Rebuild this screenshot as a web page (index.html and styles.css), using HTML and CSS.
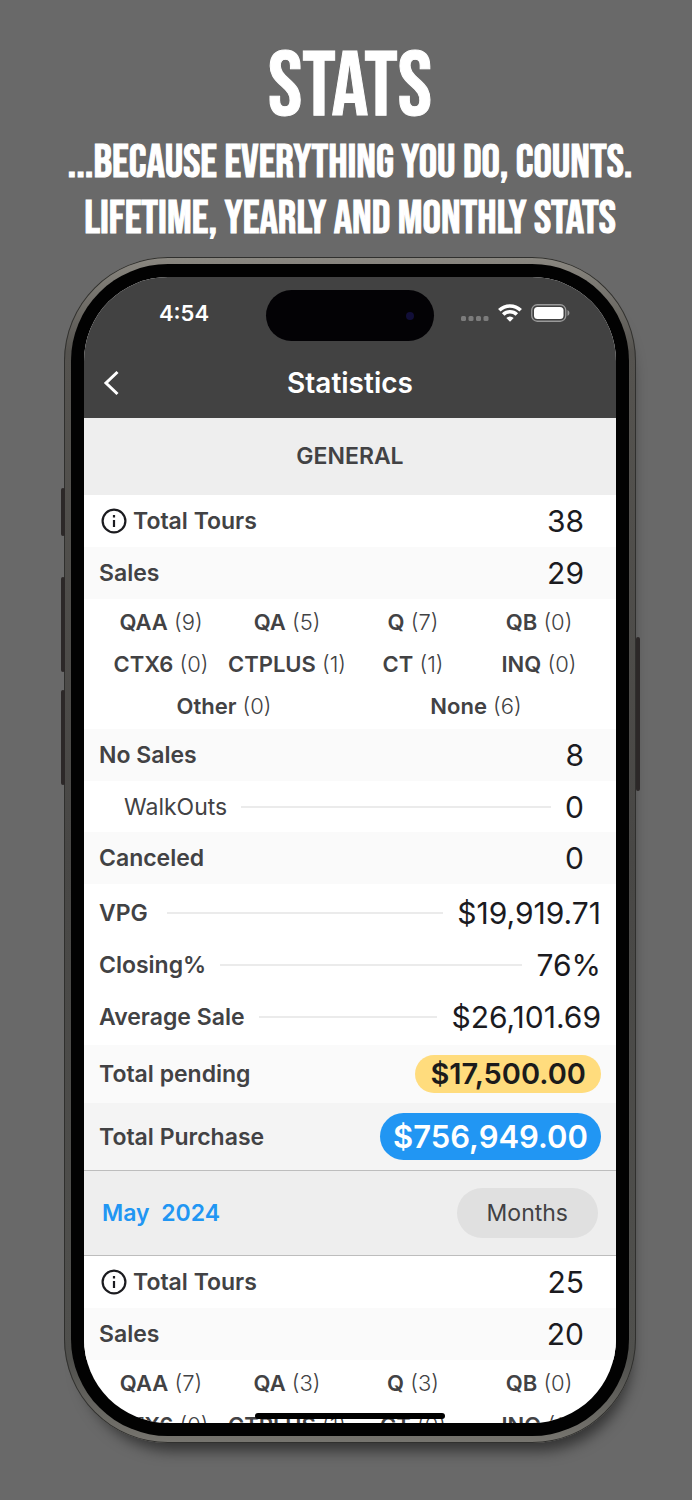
FILE: index.html
```html
<!DOCTYPE html>
<html lang="en">
<head>
<meta charset="utf-8">
<meta name="viewport" content="width=device-width, initial-scale=1">
<title>Stats</title>
<link rel="stylesheet" href="styles.css">
</head>
<body>
<header class="promo">
  <h1 class="promo-title">STATS</h1>
  <p class="promo-text">...BECAUSE EVERYTHING YOU DO, COUNTS.<br>LIFETIME, YEARLY AND MONTHLY STATS</p>
</header>
<div class="phone">
  <span class="key key-action"></span>
  <span class="key key-up"></span>
  <span class="key key-down"></span>
  <span class="key key-power"></span>
  <div class="bezel">
    <main class="screen">
      <div class="top">
        <div class="status">
          <span class="time">4:54</span>
          <span class="island"><span class="lens"></span></span>
          <span class="signals">
            <svg class="dots" width="28" height="6" viewBox="0 0 28 6" fill="#7c7c7c"><rect x="0" y="1" width="5" height="5" rx="1.5"/><rect x="7.5" y="1" width="5" height="5" rx="1.5"/><rect x="15" y="1" width="5" height="5" rx="1.5"/><rect x="22.5" y="1" width="5" height="5" rx="1.5"/></svg>
            <svg width="24" height="18" viewBox="0 0 24 18" fill="none" stroke="#fff" stroke-width="3.6"><path d="M1.3 6.3A15.3 15.3 0 0 1 22.7 6.3"/><path d="M5.2 10.5A9.7 9.7 0 0 1 18.8 10.5"/><path d="M12 17.7L8.3 14A5.3 5.3 0 0 1 15.7 14Z" fill="#fff" stroke="none"/></svg>
            <svg width="39" height="18" viewBox="0 0 39 18"><rect x=".75" y=".75" width="34" height="16.5" rx="5.5" fill="none" stroke="#9a9a9a" stroke-width="1.3"/><rect x="3" y="3" width="29.5" height="12" rx="3.5" fill="#fff"/><path d="M36.5 6q2 .8 2 3t-2 3z" fill="#9a9a9a"/></svg>
          </span>
        </div>
        <nav class="nav">
          <button class="back" type="button" aria-label="Back"><svg width="16" height="26" viewBox="0 0 16 26" fill="none" stroke="#fff" stroke-width="3"><path d="M14.500 2L3 13L14.500 24"/></svg></button>
          <h2 class="nav-title">Statistics</h2>
        </nav>
      </div>
      <h3 class="section-title">GENERAL</h3>
      <div class="row"><span class="label"><svg class="info" width="26" height="26" viewBox="0 0 26 26" fill="none" stroke="#1b1b1f" stroke-width="2.2"><circle cx="13" cy="13" r="11.4"/><path d="M13 12v7M13 7v2.5"/></svg>Total Tours</span><span class="value">38</span></div>
      <div class="row shaded"><span class="label">Sales</span><span class="value">29</span></div>
      <div class="codes">
        <span><b>QAA</b> (9)</span><span><b>QA</b> (5)</span><span><b>Q</b> (7)</span><span><b>QB</b> (0)</span>
        <span><b>CTX6</b> (0)</span><span><b>CTPLUS</b> (1)</span><span><b>CT</b> (1)</span><span><b>INQ</b> (0)</span>
        <span class="half"><b>Other</b> (0)</span><span class="half"><b>None</b> (6)</span>
      </div>
      <div class="row shaded"><span class="label">No Sales</span><span class="value">8</span></div>
      <div class="row sub"><span class="label">WalkOuts</span><span class="rule"></span><span class="value">0</span></div>
      <div class="row shaded"><span class="label">Canceled</span><span class="value">0</span></div>
      <div class="summary">
        <div class="row wide"><span class="label">VPG</span><span class="rule indent"></span><span class="value">$19,919.71</span></div>
        <div class="row wide"><span class="label">Closing%</span><span class="rule"></span><span class="value">76%</span></div>
        <div class="row wide"><span class="label">Average Sale</span><span class="rule"></span><span class="value">$26,101.69</span></div>
      </div>
      <div class="row wide shaded pending"><span class="label">Total pending</span><span class="pill amber">$17,500.00</span></div>
      <div class="row wide purchase"><span class="label">Total Purchase</span><span class="pill blue">$756,949.00</span></div>
      <div class="month">
        <h3 class="month-title">May&nbsp; 2024</h3>
        <button class="months" type="button">Months</button>
      </div>
      <div class="row"><span class="label"><svg class="info" width="26" height="26" viewBox="0 0 26 26" fill="none" stroke="#1b1b1f" stroke-width="2.2"><circle cx="13" cy="13" r="11.4"/><path d="M13 12v7M13 7v2.5"/></svg>Total Tours</span><span class="value">25</span></div>
      <div class="row shaded"><span class="label">Sales</span><span class="value">20</span></div>
      <div class="codes">
        <span><b>QAA</b> (7)</span><span><b>QA</b> (3)</span><span><b>Q</b> (3)</span><span><b>QB</b> (0)</span>
        <span><b>CTX6</b> (0)</span><span><b>CTPLUS</b> (1)</span><span><b>CT</b> (0)</span><span><b>INQ</b> (0)</span>
      </div>
      <span class="home"></span>
    </main>
  </div>
</div>
</body>
</html>
```
FILE: styles.css
```css
* { box-sizing: border-box; }
body {
  margin: 0;
  min-height: 100vh;
  background: #696969;
  font-family: Inter, "Liberation Sans", sans-serif;
  color: #424244;
}
h1, h2, h3, p { margin: 0; }
button { border: 0; padding: 0; font: inherit; color: inherit; cursor: pointer; }
.promo {
  padding-top: 40px;
  padding-left: 8px;
  text-align: center;
  color: #fff;
  font-family: "Bebas Neue", "Liberation Sans Narrow", "Liberation Sans", sans-serif;
  -webkit-text-stroke: 1px #fff;
}
.promo-title { font-size: 92px; font-weight: 400; line-height: 96px; }
.promo-text { font-size: 46px; line-height: 56px; white-space: nowrap; }

.phone {
  position: relative;
  width: calc(100% - 120px);
  max-width: 572px;
  margin: 9px auto 56px;
  left: 4px;
  padding: 7px;
  border-radius: 104px;
  background: linear-gradient(#8b8881 0, #55534f 8%, #484745 50%, #50504d 93%, #77756f 100%);
  box-shadow: inset 0 0 0 1px #30302e, 6px 18px 14px -10px rgba(0, 0, 0, .5);
}
.bezel { padding: 13px; border-radius: 97px; background: #020202; }
.screen {
  position: relative;
  aspect-ratio: 532 / 1146;
  overflow: hidden;
  border-radius: 84px;
  background: #fff;
}
.key { position: absolute; width: 4px; background: #2c2828; border-radius: 2px; }
.key-action { left: -3px; top: 19.5%; height: 4%; }
.key-up { left: -3px; top: 27%; height: 8%; }
.key-down { left: -3px; top: 36.5%; height: 8%; }
.key-power { right: -4px; top: 32%; height: 13%; }

.top { background: #424242; color: #fff; }
.status {
  display: grid;
  grid-template-columns: 1fr 168px 1fr;
  align-items: center;
  height: 71px;
}
.time { padding-left: 18px; font-size: 22px; font-weight: 600; text-align: center; }
.island {
  display: flex;
  align-items: center;
  justify-content: flex-end;
  height: 51px;
  margin-top: 6px;
  padding-right: 20px;
  border-radius: 26px;
  background: #030205;
}
.lens { width: 8px; height: 8px; border-radius: 50%; background: #110e38; }
.signals { display: flex; align-items: center; justify-content: flex-end; gap: 9px; padding-right: 46px; }
.dots { margin-top: 10px; }
.nav { position: relative; display: flex; align-items: center; justify-content: center; height: 70px; }
.nav-title { font-size: 28px; font-weight: 600; line-height: 32px; }
.back { position: absolute; left: 19px; display: flex; background: none; }

.section-title { background: #eee; text-align: center; font-size: 23px; font-weight: 600; line-height: 77px; }
.row { display: flex; align-items: center; gap: 14px; height: 52px; padding: 0 32px 0 15px; }
.row.wide { padding-right: 15px; }
.row.sub { height: 51px; padding-left: 40px; }
.shaded { background: #fafafa; }
.label { display: flex; align-items: center; gap: 6px; font-size: 23px; font-weight: 600; line-height: 28px; white-space: nowrap; }
.sub .label { font-weight: 400; }
.info { margin-left: 2px; }
.value { margin-left: auto; font-size: 30px; line-height: 36px; color: #1b1b1f; }
.rule { flex: 1; height: 2px; background: #ebebeb; }
.rule.indent { margin-left: 5px; }
.codes {
  display: grid;
  grid-template-columns: repeat(4, 1fr);
  padding: 2px 14px;
  font-size: 22px;
  line-height: 42px;
  font-weight: 300;
  text-align: center;
  white-space: nowrap;
}
.codes b { font-weight: 600; }
.half { grid-column: span 2; }
.summary { padding: 3px 0 2px; }
.row.pending { height: 58px; }
.row.purchase { height: 67px; background: #f4f4f4; }
.pill { margin-left: auto; border-radius: 24px; font-weight: 600; }
.amber { padding: 0 15px; background: #ffdc7d; color: #1b1b1b; font-size: 29px; line-height: 38px; }
.blue { padding: 0 13px; background: #2196f3; color: #fff; font-size: 31px; line-height: 47px; }
.month {
  display: flex;
  align-items: center;
  justify-content: space-between;
  height: 86px;
  padding: 0 18px;
  border: solid #bdbdbd;
  border-width: 1px 0;
  background: #eee;
}
.month-title { font-size: 23px; font-weight: 600; color: #2196f3; }
.months { padding: 0 30px; border-radius: 25px; background: #e0e0e0; font-size: 23px; line-height: 50px; }
.home {
  position: absolute;
  left: 50%;
  bottom: 4px;
  width: 190px;
  height: 6px;
  margin-left: -95px;
  border-radius: 3px;
  background: #000;
}
```
